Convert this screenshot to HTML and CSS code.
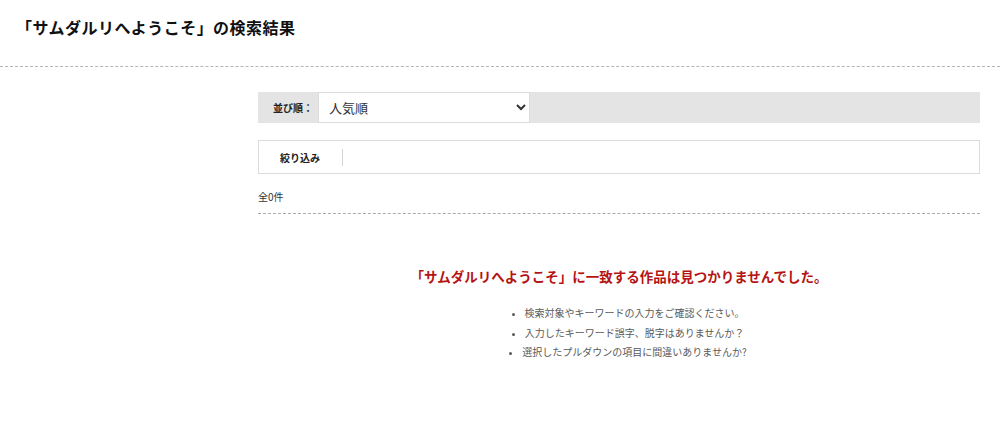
FILE: index.html
```html
<!DOCTYPE html>
<html lang="ja">
<head>
<meta charset="utf-8">
<link rel="stylesheet" href="styles.css">
</head>
<body>
<header class="page-head">
  <h1 class="page-title">「サムダルリへようこそ」の検索結果</h1>
</header>
<main class="results">
  <div class="sort-bar">
    <span class="sort-label">並び順：</span>
    <select class="sort-select">
      <option>人気順</option>
    </select>
  </div>
  <div class="filter-box">
    <span class="filter-label">絞り込み</span>
    <span class="filter-divider"></span>
  </div>
  <p class="count">全0件</p>
  <div class="empty">
    <p class="empty-title">「サムダルリへようこそ」に一致する作品は見つかりませんでした。</p>
    <ul class="hints">
      <li>検索対象やキーワードの入力をご確認ください。</li>
      <li>入力したキーワード誤字、脱字はありませんか？</li>
      <li>選択したプルダウンの項目に間違いありませんか?</li>
    </ul>
  </div>
</main>
</body>
</html>
```
FILE: styles.css
```css
html, body {
  margin: 0;
  padding: 0;
  background: #fff;
  font-family: "Noto Sans CJK JP", "Noto Sans", sans-serif;
  color: #222;
}
.page-head {
  height: 67px;
  border-bottom: 1px dashed #b5b5b5;
  padding-left: 16px;
  box-sizing: border-box;
}
.page-title {
  margin: 0;
  padding-top: 14px;
  font-size: 16px;
  line-height: 26px;
  font-weight: bold;
  color: #111;
  letter-spacing: 0.45px;
}
.results {
  margin-left: 258px;
  width: 722px;
  padding-top: 25px;
}
.sort-bar {
  display: flex;
  align-items: stretch;
  background: #e4e4e4;
  height: 31px;
}
.sort-label {
  display: flex;
  align-items: center;
  padding-left: 15px;
  width: 45px;
  font-size: 10px;
  font-weight: bold;
  color: #222;
}
.sort-select {
  width: 212px;
  height: 31px;
  margin: 0;
  border: 1px solid #dcdcdc;
  background: #fff;
  font-family: "Noto Sans CJK JP", sans-serif;
  font-size: 13px;
  color: #333;
  padding: 0 6px;
  border-radius: 0;
}
.filter-box {
  margin-top: 17px;
  height: 34px;
  box-sizing: border-box;
  border: 1px solid #dcdcdc;
  display: flex;
  align-items: center;
}
.filter-label {
  font-size: 10px;
  font-weight: bold;
  color: #222;
  padding-left: 21px;
  width: 62px;
}
.filter-divider {
  width: 1px;
  height: 17px;
  background: #d4d4d4;
}
.count {
  margin: 0;
  padding-top: 15px;
  font-size: 10px;
  line-height: 16px;
  color: #333;
  height: 24px;
  border-bottom: 1px dashed #aaa;
}
.empty {
  text-align: center;
  padding-top: 52px;
}
.empty-title {
  margin: 0;
  font-size: 13.5px;
  font-weight: bold;
  color: #b41414;
  line-height: 20px;
}
.hints {
  margin: 18px 0 0;
  padding: 0 0 0 18px;
  list-style-position: inside;
  font-size: 10px;
  line-height: 18.5px;
  color: #5a5a5a;
}
.hints li::marker {
  font-size: 9px;
}
```
